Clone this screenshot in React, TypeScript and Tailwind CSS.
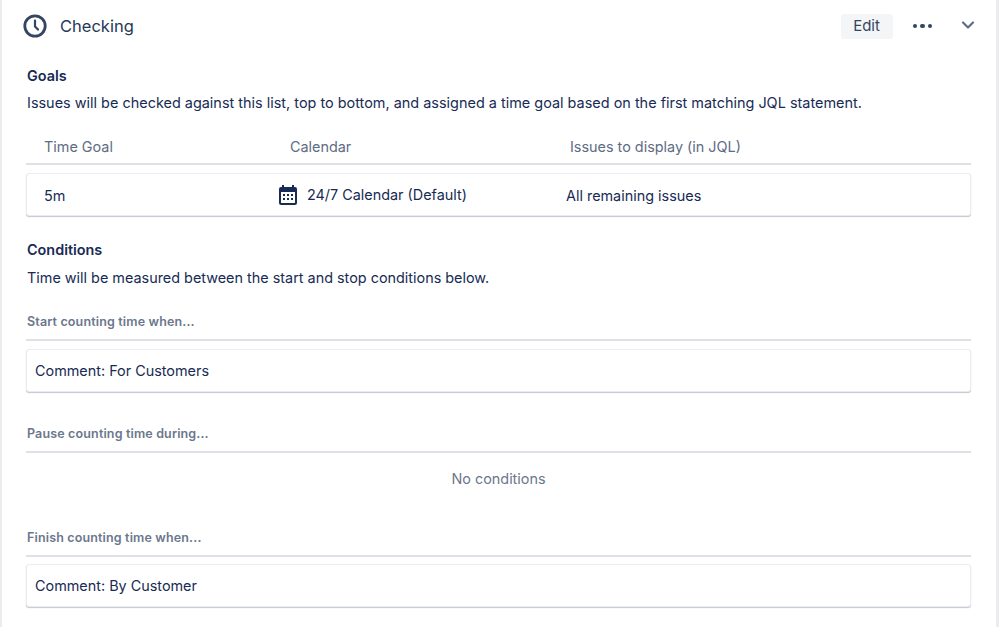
import { ChevronDown } from 'lucide-react';

const SubHeading = ({ children }: { children: string }) => (
  <div className="text-[12.5px] leading-[16px] font-semibold tracking-[0.15px] text-[#6b778c] pl-px pb-[9px] border-b-2 border-[#dfe1e6]">
    {children}
  </div>
);

const RowCard = ({ children }: { children: React.ReactNode }) => (
  <div className="mt-2 h-[43px] rounded-[3px] bg-white border border-[#ebecf0] shadow-[0_1px_1px_rgba(9,30,66,0.25)] flex items-center">
    {children}
  </div>
);

const ClockIcon = () => (
  <svg width="26" height="26" viewBox="0 0 26 26" fill="none" stroke="#344563" strokeWidth="2.8">
    <circle cx="13" cy="13" r="10.2" />
    <path d="M13 7.500V13.500L16 16.500" strokeWidth="2.200" strokeLinecap="round" strokeLinejoin="round" />
  </svg>
);

const CalendarIcon = () => (
  <svg width="20" height="20" viewBox="0 0 20 20">
    <path
      fill="#172b54"
      fillRule="evenodd"
      d="M4 0h2v2h8V0h2v2h1a2 2 0 0 1 2 2v14a2 2 0 0 1-2 2H3a2 2 0 0 1-2-2V4a2 2 0 0 1 2-2h1V0zM3 7v11h14V7H3z"
    />
    <g fill="#172b54">
      <rect x="5" y="9" width="2" height="2" />
      <rect x="9" y="9" width="2" height="2" />
      <rect x="13" y="9" width="2" height="2" />
      <rect x="5" y="13" width="2" height="2" />
      <rect x="9" y="13" width="2" height="2" />
      <rect x="13" y="13" width="2" height="2" />
    </g>
  </svg>
);

export default function App() {
  return (
    <div className="w-[999px] h-[627px] overflow-hidden bg-white text-[#172b54] font-['Inter',sans-serif] text-[14.4px] border-l-2 border-r-[3px] border-[#ebecf0]">
      <header className="flex items-center h-[52px] pl-[20px] pr-[18px]">
        <ClockIcon />
        <h2 className="ml-[12px] text-[16.5px] text-[#253858]">Checking</h2>
        <button className="ml-auto w-[52px] h-[25px] rounded-[3px] bg-[#f4f5f7] text-[#344563] text-[15px]">Edit</button>
        <div className="ml-[20px] flex gap-[3px]">
          <span className="w-[4.5px] h-[4.5px] rounded-full bg-[#344563]" />
          <span className="w-[4.5px] h-[4.5px] rounded-full bg-[#344563]" />
          <span className="w-[4.5px] h-[4.5px] rounded-full bg-[#344563]" />
        </div>
        <ChevronDown size={20} strokeWidth={2.6} color="#5e6c84" className="ml-[26px] -mt-[2px]" />
      </header>

      <main className="pl-[24px] pr-[25px]">
        <h3 className="mt-[15px] pl-px leading-[18px] font-semibold">Goals</h3>
        <p className="mt-[9px] pl-px leading-[18px] text-[14.45px]">
          Issues will be checked against this list, top to bottom, and assigned a time goal based on the first matching JQL statement.
        </p>

        <div className="mt-[22px] h-[31px] flex items-center border-b-2 border-[#dfe1e6] text-[#5e6c84] pb-[4px]">
          <span className="pl-[18px] w-[264px]">Time Goal</span>
          <span className="w-[280px]">Calendar</span>
          <span>Issues to display (in JQL)</span>
        </div>
        <RowCard>
          <span className="pl-[17px] w-[251px] pt-[2px]">5m</span>
          <span className="w-[288px] flex items-center gap-[9px] pt-px">
            <CalendarIcon />
            24/7 Calendar (Default)
          </span>
          <span className="pt-[2px]">All remaining issues</span>
        </RowCard>

        <h3 className="mt-[25px] pl-px leading-[18px] font-semibold">Conditions</h3>
        <p className="mt-[10px] pl-px leading-[18px]">Time will be measured between the start and stop conditions below.</p>

        <div className="mt-[27px]">
          <SubHeading>Start counting time when...</SubHeading>
          <RowCard><span className="pl-2">Comment: For Customers</span></RowCard>
        </div>

        <div className="mt-[34px]">
          <SubHeading>Pause counting time during...</SubHeading>
          <div className="h-[52px] flex items-center justify-center text-[#6b778c]">No conditions</div>
        </div>

        <div className="mt-[25px]">
          <SubHeading>Finish counting time when...</SubHeading>
          <div className="-mt-px">
            <RowCard><span className="pl-2">Comment: By Customer</span></RowCard>
          </div>
        </div>
      </main>
    </div>
  );
}
